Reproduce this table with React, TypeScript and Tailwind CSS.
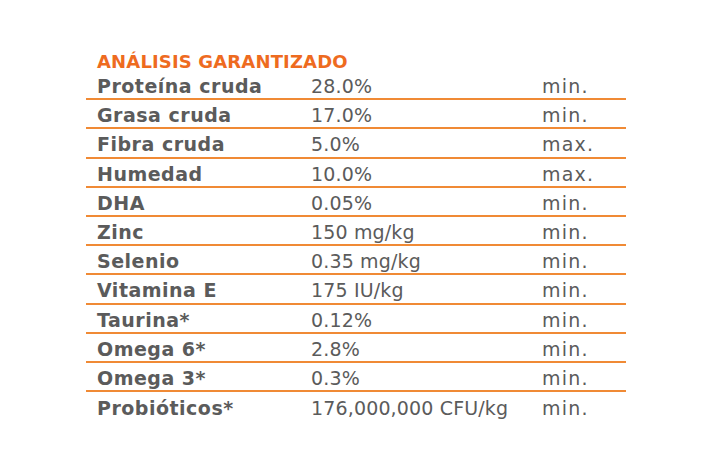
import React from "react";

const rows: [string, string, string][] = [
  ["Proteína cruda", "28.0%", "min."],
  ["Grasa cruda", "17.0%", "min."],
  ["Fibra cruda", "5.0%", "max."],
  ["Humedad", "10.0%", "max."],
  ["DHA", "0.05%", "min."],
  ["Zinc", "150 mg/kg", "min."],
  ["Selenio", "0.35 mg/kg", "min."],
  ["Vitamina E", "175 IU/kg", "min."],
  ["Taurina*", "0.12%", "min."],
  ["Omega 6*", "2.8%", "min."],
  ["Omega 3*", "0.3%", "min."],
  ["Probióticos*", "176,000,000 CFU/kg", "min."],
];

export default function App() {
  return (
    <div className="w-[709px] h-[473px] bg-white" style={{ fontFamily: "'DejaVu Sans', sans-serif" }}>
      <div className="pt-[49px] pl-[86px] w-[626px]">
        <div className="pl-[11px] h-[22px] text-[18px] leading-[25px] font-bold tracking-[0.15px] text-[#ee6b1f]">ANÁLISIS GARANTIZADO</div>
        {rows.map((r, i) => (
          <div
            key={i}
            className={`grid grid-cols-[214px_231px_1fr] pl-[11px] h-[29.2px] items-center pt-[3px] text-[19px] leading-[24px] text-[#5b5b5b] ${i < rows.length - 1 ? "border-b-2 border-[#f08a35]" : ""}`}
          >
            <div className="font-bold tracking-[0.5px]">{r[0]}</div>
            <div className="tracking-[0.15px]">{r[1]}</div>
            <div className="tracking-[1.2px]">{r[2]}</div>
          </div>
        ))}
      </div>
    </div>
  );
}
